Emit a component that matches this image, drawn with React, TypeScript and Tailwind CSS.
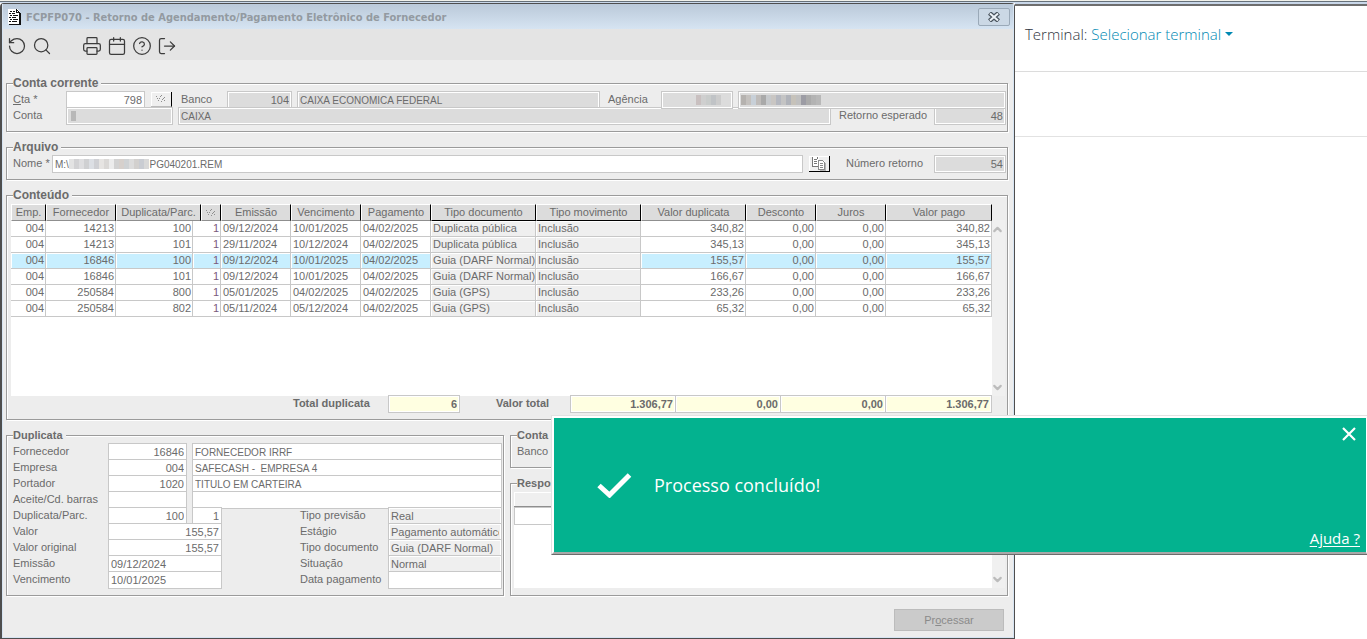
import { InputHTMLAttributes, ReactNode } from "react";
import clsx from "clsx";
import {
  Calendar,
  ChevronDown,
  ChevronUp,
  CircleHelp,
  LogOut,
  Printer,
  RotateCcw,
  Search,
} from "lucide-react";

interface TitleRow {
  emp: string;
  fornecedor: string;
  duplicata: string;
  parcela: string;
  emissao: string;
  vencimento: string;
  pagamento: string;
  documento: string;
  valor: string;
}

const rows: TitleRow[] = [
  { emp: "004", fornecedor: "14213", duplicata: "100", parcela: "1", emissao: "09/12/2024", vencimento: "10/01/2025", pagamento: "04/02/2025", documento: "Duplicata pública", valor: "340,82" },
  { emp: "004", fornecedor: "14213", duplicata: "101", parcela: "1", emissao: "29/11/2024", vencimento: "10/12/2024", pagamento: "04/02/2025", documento: "Duplicata pública", valor: "345,13" },
  { emp: "004", fornecedor: "16846", duplicata: "100", parcela: "1", emissao: "09/12/2024", vencimento: "10/01/2025", pagamento: "04/02/2025", documento: "Guia (DARF Normal)", valor: "155,57" },
  { emp: "004", fornecedor: "16846", duplicata: "101", parcela: "1", emissao: "09/12/2024", vencimento: "10/01/2025", pagamento: "04/02/2025", documento: "Guia (DARF Normal)", valor: "166,67" },
  { emp: "004", fornecedor: "250584", duplicata: "800", parcela: "1", emissao: "05/01/2025", vencimento: "04/02/2025", pagamento: "04/02/2025", documento: "Guia (GPS)", valor: "233,26" },
  { emp: "004", fornecedor: "250584", duplicata: "802", parcela: "1", emissao: "05/11/2024", vencimento: "05/12/2024", pagamento: "04/02/2025", documento: "Guia (GPS)", valor: "65,32" },
];

const selectedRow = 2;

// Masked values are shown as strips of coloured blocks
const agencyCodeMask = ["#c9c0c0", "#cfcfcf", "#c9cccb", "#c0c3c6", "#cccccc"];
const agencyNameMask = ["#b5b2af", "#c4c1be", "#c8d0d8", "#bfbcba", "#a9a9a9", "#c6c9cc", "#c9c6c3", "#b5b8c0", "#c4c4c4", "#b0b3ba", "#c6c2ba", "#c0c0c0", "#9c9ca4", "#aaaaaa", "#b3b3b3", "#b8b8b8"];
const pathMask = ["#e3e3e3", "#d2d2d4", "#dedee0", "#cfd0d2", "#dcdfe4", "#cfd0d4", "#e6e4e2", "#dad8d6", "#ececec", "#d2d2d2", "#d6d0cc", "#cfd2d4", "#dcdcdc", "#d2d0ce", "#c9ccd2", "#d8d8d8"];

function Mask({ colors, className }: { colors: string[]; className: string }) {
  return (
    <span className={clsx("pointer-events-none absolute flex h-[10px]", className)}>
      {colors.map((color, i) => (
        <span key={i} className="w-[5px]" style={{ backgroundColor: color }} />
      ))}
    </span>
  );
}

type Tone = "white" | "gray" | "flat" | "yellow";

interface FieldProps extends InputHTMLAttributes<HTMLInputElement> {
  tone?: Tone;
}

function Field({ tone = "white", className, ...props }: FieldProps) {
  return (
    <input
      readOnly
      className={clsx(
        "block h-[18px] min-w-0 border border-[#c8c8c8] px-[2px] text-[#6b6b6b] outline-none",
        tone === "white" && "bg-white",
        tone === "gray" && "bg-[#dcdcdc] shadow-[inset_0_0_0_1px_#fff]",
        tone === "flat" && "bg-[#efefef] shadow-[inset_0_0_0_1px_#fff]",
        tone === "yellow" && "bg-[#ffffe1] font-bold shadow-[inset_0_0_0_1px_#fff]",
        className
      )}
      {...props}
    />
  );
}

function Group({
  title,
  large,
  className,
  children,
}: {
  title: string;
  large?: boolean;
  className: string;
  children: ReactNode;
}) {
  return (
    <fieldset
      className={clsx(
        "min-w-0 border border-[#9b9b9b] pl-[6px] shadow-[1px_1px_0_#fff,inset_1px_1px_0_#fff]",
        className
      )}
    >
      <legend
        className={clsx(
          "bg-[#ededed] pr-[3px] font-bold leading-3",
          large ? "text-[12px]" : "text-[11px]"
        )}
      >
        {title}
      </legend>
      {children}
    </fieldset>
  );
}

function HatchIcon() {
  return (
    <svg className="h-[8px] w-[10px]" viewBox="0 0 10 8" shapeRendering="crispEdges">
      <path
        d="M0 1h1v1H0zM1 3h1v1H1zM4 1h1v1H4zM3 3h1v1H3zM5 0h1v1H5zM2 5h1v1H2zM8 2h1v1H8zM7 3h1v1H7zM6 4h1v1H6zM5 6h1v1H5zM8 5h1v1H8z"
        fill="#8f8f8f"
      />
    </svg>
  );
}

function CopyIcon() {
  return (
    <svg className="h-[14px] w-[16px]" viewBox="0 0 16 14" shapeRendering="crispEdges">
      <path d="M1 0h7v10H1z" fill="#fff" />
      <path d="M1 0h1v10H1zM1 9h6v1H1zM3 2h3v1H3zM3 4h3v1H3zM3 6h3v1H3zM6 0h1v2H6z" fill="#777" />
      <path d="M8 4h6v9H8z" fill="#fff" />
      <path d="M7 3h5v1H7zM7 3h1v10H7zM7 12h7v1H7zM13 5h1v8h-1zM12 4h1v1h-1zM9 6h3v1H9zM9 8h3v1H9zM9 10h3v1H9z" fill="#8a8a8a" />
      <path d="M14 6h1v8h-1zM9 13h6v1H9z" fill="#b5b5b5" />
    </svg>
  );
}

function DocumentIcon() {
  return (
    <svg className="h-[16px] w-[13px]" viewBox="0 0 13 16" shapeRendering="crispEdges">
      <path d="M0 0h9l3 3v12H0z" fill="#fff" />
      <path
        d="M11 4h2v12H1v-1h10zM8 0h1v3h3v1H8zM9 1h1v1H9zM10 2h1v1h-1zM2 2h2v1H2zM5 2h2v1H5zM1 4h2v1H1zM4 4h3v1H4zM2 6h2v1H2zM5 6h5v1H5zM1 8h2v1H1zM4 8h4v1H4zM2 10h2v1H2zM5 10h5v1H5zM1 12h2v1H1zM4 12h5v1H4z"
        fill="#111"
      />
    </svg>
  );
}

function ToolButton({ label, children }: { label: string; children: ReactNode }) {
  return (
    <button
      type="button"
      aria-label={label}
      className="flex w-[25px] items-center justify-center text-[#3c3c3c] [&_svg]:size-5"
    >
      {children}
    </button>
  );
}

function TitleBar() {
  return (
    <header className="flex h-[25px] items-center bg-linear-to-b from-[#bac9d9] to-[#d6e4f2] pl-[5px] pr-[3px]">
      <DocumentIcon />
      <h1 className="ml-[5px] mt-[2px] flex-1 whitespace-nowrap font-['DejaVu_Sans_Condensed','DejaVu_Sans',sans-serif] text-[11px] font-bold text-[#939aa1]">
        FCPFP070 - Retorno de Agendamento/Pagamento Eletrônico de Fornecedor
      </h1>
      <button
        type="button"
        aria-label="Fechar janela"
        className="flex h-[18px] w-8 items-center justify-center rounded-[2px] border border-[#9aa9b8] bg-[#cbd8e5]"
      >
        <svg className="h-[10px] w-[12px]" viewBox="0 0 12 10">
          <path d="M1.500 1l9 8M10.500 1l-9 8" stroke="#4a545e" strokeWidth="4.500" />
          <path d="M2 1.500l8 7M10 1.500l-8 7" stroke="#eef3f8" strokeWidth="2" />
        </svg>
      </button>
    </header>
  );
}

function Toolbar() {
  return (
    <div className="flex h-[31px] items-center bg-[#e4e4e4] pl-px pt-[3px]">
      <ToolButton label="Limpar">
        <RotateCcw strokeWidth={1.5} />
      </ToolButton>
      <ToolButton label="Pesquisar">
        <Search strokeWidth={1.5} />
      </ToolButton>
      <div className="ml-[25px] flex">
        <ToolButton label="Imprimir">
          <Printer strokeWidth={1.5} />
        </ToolButton>
        <ToolButton label="Agenda">
          <Calendar strokeWidth={1.5} />
        </ToolButton>
        <ToolButton label="Ajuda">
          <CircleHelp strokeWidth={1.5} />
        </ToolButton>
        <ToolButton label="Sair">
          <LogOut strokeWidth={1.5} />
        </ToolButton>
      </div>
    </div>
  );
}

function AccountGroup() {
  return (
    <Group title="Conta corrente" large className="pb-2 pr-px">
      <div className="mt-[2px] flex h-4">
        <label htmlFor="cta" className="w-[53px]">
          <span className="underline">C</span>ta *
        </label>
        <Field id="cta" defaultValue="798" className="w-[79px] text-right" />
        <button
          type="button"
          aria-label="Buscar conta"
          className="ml-[6px] mt-px flex h-[15px] w-[21px] items-center justify-center border-b border-r border-b-[#bbb] border-r-black bg-[#efefef] shadow-[inset_1px_1px_0_#fff]"
        >
          <HatchIcon />
        </button>
        <label htmlFor="banco" className="ml-[9px] w-[46px]">
          Banco
        </label>
        <Field id="banco" tone="gray" defaultValue="104" className="w-[65px] text-right" />
        <Field
          tone="gray"
          aria-label="Nome do banco"
          defaultValue="CAIXA ECONOMICA FEDERAL"
          className="ml-[5px] flex-1 text-[10px]"
        />
        <label htmlFor="agencia" className="ml-2 w-[53px]">
          Agência
        </label>
        <div className="relative w-[72px]">
          <Field id="agencia" tone="gray" className="w-full" />
          <Mask colors={agencyCodeMask} className="right-3 top-1" />
        </div>
        <div className="relative ml-[5px] w-[268px]">
          <Field tone="gray" aria-label="Nome da agência" className="w-full" />
          <Mask colors={agencyNameMask} className="left-[3px] top-1" />
        </div>
      </div>
      <div className="flex h-4">
        <label htmlFor="conta" className="w-[53px]">
          Conta
        </label>
        <div className="relative w-[107px]">
          <Field id="conta" tone="gray" className="w-full" />
          <Mask colors={["#b8b8b8"]} className="left-[5px] top-1" />
        </div>
        <Field
          tone="gray"
          aria-label="Nome da conta"
          defaultValue="CAIXA"
          className="ml-[5px] flex-1 text-[10px]"
        />
        <label htmlFor="esperado" className="ml-2 w-[95px]">
          Retorno esperado
        </label>
        <Field id="esperado" tone="gray" defaultValue="48" className="w-[72px] text-right" />
      </div>
    </Group>
  );
}

function FileGroup() {
  return (
    <Group title="Arquivo" large className="mt-[9px] pb-2 pr-px">
      <div className="mt-[2px] flex h-4">
        <label htmlFor="nome" className="w-[39px]">
          Nome *
        </label>
        <div className="relative flex-1">
          <Field
            id="nome"
            defaultValue={"M:\\" + " ".repeat(29) + "PG040201.REM"}
            className="w-full text-[10px]"
          />
          <Mask colors={pathMask} className="left-[17px] top-1" />
        </div>
        <button
          type="button"
          aria-label="Selecionar arquivo"
          className="ml-[6px] mt-px flex h-4 w-[21px] items-center justify-center border-b border-r border-black bg-[#efefef] shadow-[inset_1px_1px_0_#fff]"
        >
          <CopyIcon />
        </button>
        <label htmlFor="numero" className="ml-4 w-[88px]">
          Número retorno
        </label>
        <Field id="numero" tone="gray" defaultValue="54" className="w-[72px] text-right" />
      </div>
    </Group>
  );
}

function HeadCell({ span, dark, children }: { span?: number; dark?: boolean; children: ReactNode }) {
  return (
    <th
      colSpan={span}
      className={clsx(
        "h-[17px] whitespace-nowrap border-b border-l border-r border-t border-l-white border-r-black border-t-white bg-[#dcdcdc] p-0 text-center font-normal leading-[15px]",
        dark ? "border-b-black" : "border-b-[#8f8f8f]"
      )}
    >
      {children}
    </th>
  );
}

function Cell({
  span,
  align = "left",
  tone = "white",
  children,
}: {
  span?: number;
  align?: "left" | "right";
  tone?: "white" | "flat" | "selected";
  children: ReactNode;
}) {
  return (
    <td
      colSpan={span}
      className={clsx(
        "h-4 whitespace-nowrap border-b border-r border-[#c8c8c8] p-0 leading-[15px] shadow-[inset_1px_1px_0_#fff]",
        align === "right" ? "pr-px text-right" : "pl-[2px]",
        tone === "white" && "bg-white",
        tone === "flat" && "bg-[#efefef]",
        tone === "selected" && "bg-[#c8efff]"
      )}
    >
      {children}
    </td>
  );
}

function ContentGroup() {
  return (
    <Group title="Conteúdo" large className="mt-[9px] pb-[6px] pr-[2px]">
      <div className="-ml-[2px] mt-[3px] flex">
        <div className="min-h-[192px] flex-1 bg-white">
          <table className="w-full table-fixed border-separate border-spacing-0">
            <colgroup>
              <col className="w-[35px]" />
              <col className="w-[70px]" />
              <col className="w-[77px]" />
              <col className="w-[8px]" />
              <col className="w-[20px]" />
              <col className="w-[70px]" />
              <col className="w-[70px]" />
              <col className="w-[70px]" />
              <col className="w-[105px]" />
              <col className="w-[105px]" />
              <col className="w-[105px]" />
              <col className="w-[70px]" />
              <col className="w-[70px]" />
              <col />
            </colgroup>
            <thead>
              <tr>
                <HeadCell>Emp.</HeadCell>
                <HeadCell>Fornecedor</HeadCell>
                <HeadCell span={2}>Duplicata/Parc.</HeadCell>
                <HeadCell>
                  <span className="flex justify-center">
                    <HatchIcon />
                  </span>
                </HeadCell>
                <HeadCell>Emissão</HeadCell>
                <HeadCell>Vencimento</HeadCell>
                <HeadCell>Pagamento</HeadCell>
                <HeadCell dark>Tipo documento</HeadCell>
                <HeadCell dark>Tipo movimento</HeadCell>
                <HeadCell>Valor duplicata</HeadCell>
                <HeadCell>Desconto</HeadCell>
                <HeadCell>Juros</HeadCell>
                <HeadCell>Valor pago</HeadCell>
              </tr>
            </thead>
            <tbody>
              {rows.map((row, i) => {
                const tone = i === selectedRow ? "selected" : "white";
                return (
                  <tr key={i}>
                    <Cell align="right" tone={tone}>{row.emp}</Cell>
                    <Cell align="right" tone={tone}>{row.fornecedor}</Cell>
                    <Cell align="right" tone={tone}>{row.duplicata}</Cell>
                    <Cell align="right" tone={tone} span={2}>
                      <span className="text-[#7a5a7c]">{row.parcela}</span>
                    </Cell>
                    <Cell tone={tone}>{row.emissao}</Cell>
                    <Cell tone={tone}>{row.vencimento}</Cell>
                    <Cell tone={tone}>{row.pagamento}</Cell>
                    <Cell tone="flat">{row.documento}</Cell>
                    <Cell tone="flat">Inclusão</Cell>
                    <Cell align="right" tone={tone}>{row.valor}</Cell>
                    <Cell align="right" tone={tone}>0,00</Cell>
                    <Cell align="right" tone={tone}>0,00</Cell>
                    <Cell align="right" tone={tone}>{row.valor}</Cell>
                  </tr>
                );
              })}
            </tbody>
          </table>
        </div>
        <div className="mt-4 flex w-[13px] flex-col items-center justify-between bg-[#f0f0f0] pb-[2px] pr-[2px] pt-[3px] text-[#bcbcbc]">
          <ChevronUp className="size-[13px]" strokeWidth={4} />
          <ChevronDown className="size-[13px]" strokeWidth={4} />
        </div>
      </div>
      <div className="-mt-px flex h-[18px] justify-end pr-[13px] font-bold">
        <label htmlFor="total" className="w-[95px]">
          Total duplicata
        </label>
        <Field id="total" tone="yellow" defaultValue="6" className="w-[72px] text-right" />
        <label htmlFor="valorTotal" className="ml-9 w-[74px]">
          Valor total
        </label>
        <Field id="valorTotal" tone="yellow" defaultValue="1.306,77" className="w-[106px] text-right" />
        <Field aria-label="Total desconto" tone="yellow" defaultValue="0,00" className="-ml-px w-[106px] text-right" />
        <Field aria-label="Total juros" tone="yellow" defaultValue="0,00" className="-ml-px w-[106px] text-right" />
        <Field aria-label="Total pago" tone="yellow" defaultValue="1.306,77" className="-ml-px w-[107px] text-right" />
      </div>
    </Group>
  );
}

const people = [
  { id: "fornecedor", label: "Fornecedor", code: "16846", name: "FORNECEDOR IRRF" },
  { id: "empresa", label: "Empresa", code: "004", name: "SAFECASH -  EMPRESA 4" },
  { id: "portador", label: "Portador", code: "1020", name: "TITULO EM CARTEIRA" },
  { id: "aceite", label: "Aceite/Cd. barras", code: "", name: "" },
];

const details = [
  { id: "parcela", label: "Duplicata/Parc.", value: "100", side: "Tipo previsão", sideValue: "Real" },
  { id: "valor", label: "Valor", value: "155,57", side: "Estágio", sideValue: "Pagamento automático" },
  { id: "original", label: "Valor original", value: "155,57", side: "Tipo documento", sideValue: "Guia (DARF Normal)" },
  { id: "emissao", label: "Emissão", value: "09/12/2024", side: "Situação", sideValue: "Normal" },
  { id: "vencimento", label: "Vencimento", value: "10/01/2025", side: "Data pagamento", sideValue: "" },
];

function DuplicateGroup() {
  return (
    <Group title="Duplicata" className="pb-2 pr-px">
      <div className="mt-[2px]">
        {people.map((item) => (
          <div key={item.id} className="flex h-4">
            <label htmlFor={item.id} className="w-[95px]">
              {item.label}
            </label>
            <Field id={item.id} defaultValue={item.code} className="w-[79px] text-right" />
            <Field
              aria-label={`${item.label} descrição`}
              defaultValue={item.name}
              className="ml-[5px] flex-1 text-[10px]"
            />
          </div>
        ))}
        {details.map((item) => (
          <div key={item.id} className="flex h-4">
            <label htmlFor={item.id} className="w-[95px]">
              {item.label}
            </label>
            <div className="flex w-[192px]">
              {item.id === "parcela" ? (
                <>
                  <Field id={item.id} defaultValue={item.value} className="w-[79px] text-right" />
                  <Field aria-label="Parcela" defaultValue="1" className="ml-[5px] w-[30px] text-right" />
                </>
              ) : (
                <Field
                  id={item.id}
                  defaultValue={item.value}
                  className={clsx("w-[114px]", item.value.includes(",") && "text-right")}
                />
              )}
            </div>
            <label htmlFor={`${item.id}-side`} className="w-[88px]">
              {item.side}
            </label>
            <Field
              id={`${item.id}-side`}
              tone={item.sideValue ? "flat" : "white"}
              defaultValue={item.sideValue}
              className="flex-1"
            />
          </div>
        ))}
      </div>
    </Group>
  );
}

function ResponseGroup() {
  return (
    <Group title="Resposta" className="mt-[9px] flex-1 pb-[7px] pr-[2px]">
      <div className="-ml-[3px] mt-[3px] flex h-24">
        <div className="flex-1 bg-white">
          <div className="h-[15px] border-b border-[#8f8f8f] bg-[#efefef] shadow-[inset_1px_1px_0_#fff]" />
          <Field aria-label="Resposta" className="w-full" />
        </div>
        <div className="mt-4 flex w-[13px] flex-col items-center justify-end bg-[#f0f0f0] pb-[2px] pr-[2px] text-[#bcbcbc]">
          <ChevronDown className="size-[13px]" strokeWidth={4} />
        </div>
      </div>
    </Group>
  );
}

function Toast() {
  return (
    <div
      role="alert"
      className="absolute right-0 top-[415px] w-[816px] border-b border-l border-t border-[#e2e2e2] border-b-[#6b6b6b]"
    >
      <div className="relative flex h-[138px] items-center border-2 border-r border-white border-b-[#a8a8a8] bg-[#03b28f] pl-[43px] text-white">
        <svg className="h-[26px] w-[35px]" viewBox="0 0 35 26">
          <path d="M2 13.500l10.500 9.500L32.500 3" fill="none" stroke="currentColor" strokeWidth="5" />
        </svg>
        <p className="ml-[22px] font-['Open_Sans',sans-serif] text-[18px]">Processo concluído!</p>
        <button type="button" aria-label="Fechar" className="absolute right-[10px] top-[9px]">
          <svg className="size-[14px]" viewBox="0 0 14 14">
            <path d="M1 1l12 12M13 1L1 13" stroke="currentColor" strokeWidth="2.200" />
          </svg>
        </button>
        <a
          href="#ajuda"
          className="absolute bottom-1 right-[6px] font-['Open_Sans',sans-serif] text-[15px] leading-5 underline underline-offset-2"
        >
          Ajuda ?
        </a>
      </div>
    </div>
  );
}

function SidePanel() {
  return (
    <aside className="w-[352px] shrink-0 bg-white">
      <div className="h-[3px] border-b-2 border-[#6e6e6e] bg-[#c8d6e8]" />
      <div className="flex h-[66px] items-start border-b border-[#dcdcdc] pl-[10px] pt-4 font-['Open_Sans',sans-serif] text-[15px] font-light leading-6 text-[#2f3640]">
        <span>Terminal:</span>
        <button type="button" className="ml-1 flex items-center text-[#0089b3]">
          Selecionar terminal
          <svg className="ml-1 h-[4px] w-[8px]" viewBox="0 0 8 4">
            <path d="M0 0h8L4 4z" fill="currentColor" />
          </svg>
        </button>
      </div>
      <div className="h-[65px] border-b border-[#e2e2e2]" />
    </aside>
  );
}

export default function App() {
  return (
    <div className="relative flex min-h-screen flex-col bg-white font-['Liberation_Sans',Arial,sans-serif] text-[11px] leading-4 text-[#6b6b6b]">
      <div className="h-[3px] border-t border-[#f1f1ea] bg-[#c9d8ea]">
        <div className="h-px bg-[#66717a]" />
      </div>
      <div className="flex flex-1">
        <main className="flex min-w-0 flex-1 flex-col rounded-t-[4px] border border-l-2 border-[#4e4e4e] bg-[#ededed]">
          <div className="flex flex-1 flex-col border border-t-0 border-[#d6e4f2]">
            <TitleBar />
            <Toolbar />
            <form className="pb-[5px] pl-[3px] pr-[5px] pt-[17px]" onSubmit={(e) => e.preventDefault()}>
              <AccountGroup />
              <FileGroup />
              <ContentGroup />
              <div className="mt-[9px] grid grid-cols-2 gap-[6px]">
                <DuplicateGroup />
                <div className="flex flex-col">
                  <Group title="Conta" className="pb-2 pr-px">
                    <div className="mt-[2px] h-4">Banco</div>
                  </Group>
                  <ResponseGroup />
                </div>
              </div>
              <div className="mr-1 mt-[13px] flex justify-end">
                <button
                  type="submit"
                  disabled
                  className="h-[22px] w-[110px] border border-[#bcbcbc] bg-[#cbcbcb] text-[#8a8a8a]"
                >
                  Pr<span className="underline">o</span>cessar
                </button>
              </div>
            </form>
          </div>
        </main>
        <SidePanel />
      </div>
      <Toast />
    </div>
  );
}
